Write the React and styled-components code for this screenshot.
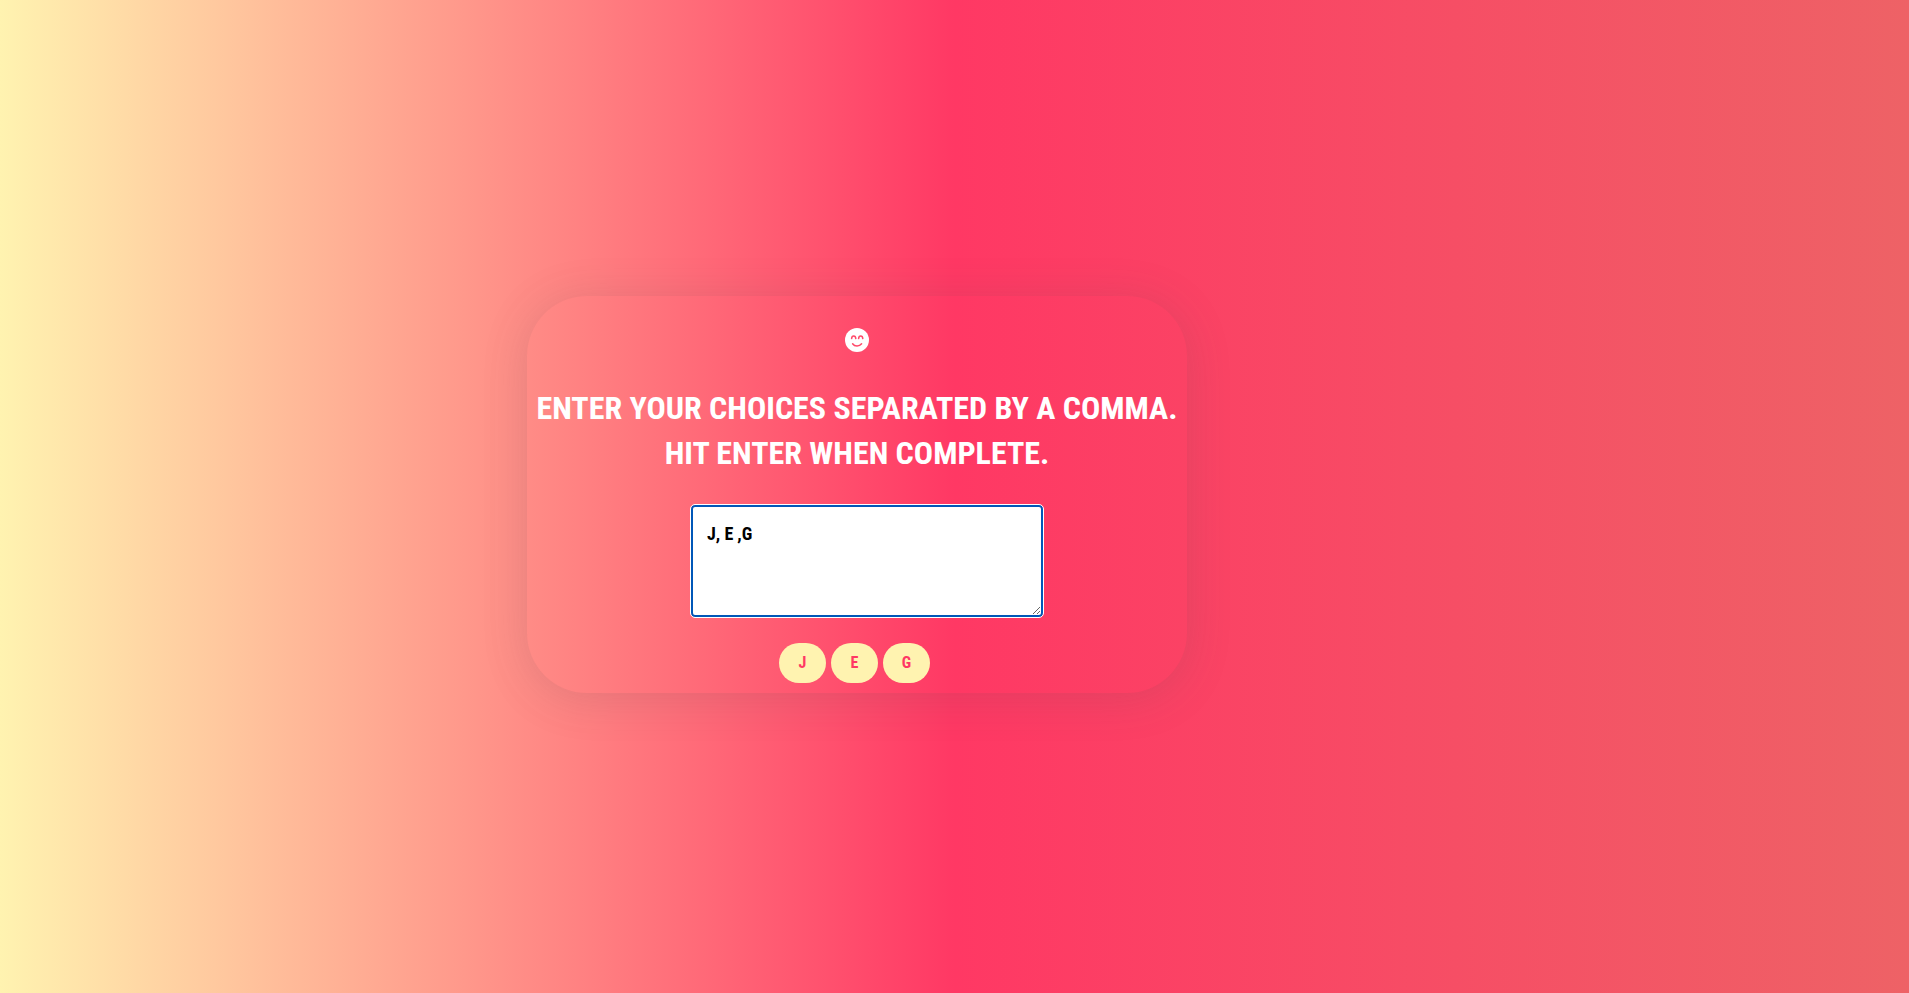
import React, { useState } from "react";
import styled, { createGlobalStyle } from "styled-components";

const GlobalStyle = createGlobalStyle`
  * {
    box-sizing: border-box;
  }
  body {
    margin: 0;
    font-family: "Roboto Condensed", "Open Sans Condensed", "Liberation Sans Narrow", "Liberation Sans", sans-serif;
  }
`;

const Page = styled.main`
  display: flex;
  justify-content: center;
  align-items: flex-start;
  min-height: 100vh;
  padding: 296px 195px 40px 0;
  background: linear-gradient(to right, #fff3b0, #ff3864 50%, #ee6266);
`;

const Card = styled.section`
  display: flex;
  flex-direction: column;
  align-items: center;
  width: 100%;
  max-width: 660px;
  padding: 32px 0 10px;
  border-radius: 60px;
  box-shadow: 0 5px 45px rgba(83, 83, 83, 0.17);
`;

const Face = styled.svg`
  width: 24px;
  height: 24px;
  fill: #fff;
`;

const Features = styled.path`
  fill: none;
  stroke: #ff4a6a;
  stroke-width: 1.5;
  stroke-linecap: round;
`;

const Prompt = styled.label`
  margin-top: 34px;
  color: #fff;
  font-size: 32px;
  font-weight: 700;
  line-height: 45px;
  text-align: center;
  text-transform: uppercase;
`;

const Line = styled.span`
  display: block;
`;

const Choices = styled.textarea`
  width: 352px;
  max-width: 100%;
  height: 112px;
  margin: 29px 0 0 20px;
  padding: 14px;
  border: 2px solid #0057b8;
  border-radius: 4px;
  outline: 1px solid #fff;
  background: #fff;
  color: #000;
  font-family: inherit;
  font-size: 18px;
  font-weight: 700;
  line-height: 26px;
`;

const Tags = styled.div`
  display: flex;
  flex-wrap: wrap;
  gap: 5px;
  margin: 26px 5px 0 0;
`;

const Tag = styled.span`
  min-width: 47px;
  padding: 0 16px;
  border-radius: 20px;
  background: #fff3b0;
  color: #ff3864;
  font-size: 16px;
  font-weight: 700;
  line-height: 40px;
  text-align: center;
`;

export default function App() {
  const [text, setText] = useState("J, E ,G");
  const choices = text
    .split(",")
    .map((choice) => choice.trim())
    .filter(Boolean);

  return (
    <>
      <GlobalStyle />
      <Page>
        <Card>
          <Face viewBox="0 0 24 24" aria-hidden="true">
            <circle cx="12" cy="12" r="12" />
            <Features d="M6.6 10.6C6.8 7 10.6 7 10.8 10.6M13.6 10.6C13.8 7 17.6 7 17.8 10.6M7.6 15.8C9.6 18.7 14.4 18.7 16.6 15.8" />
          </Face>
          <Prompt htmlFor="choices">
            <Line>Enter your choices separated by a comma.</Line>
            <Line>Hit enter when complete.</Line>
          </Prompt>
          <Choices
            id="choices"
            value={text}
            spellCheck={false}
            onChange={(event) => setText(event.target.value)}
          />
          <Tags>
            {choices.map((choice, index) => (
              <Tag key={index}>{choice}</Tag>
            ))}
          </Tags>
        </Card>
      </Page>
    </>
  );
}
